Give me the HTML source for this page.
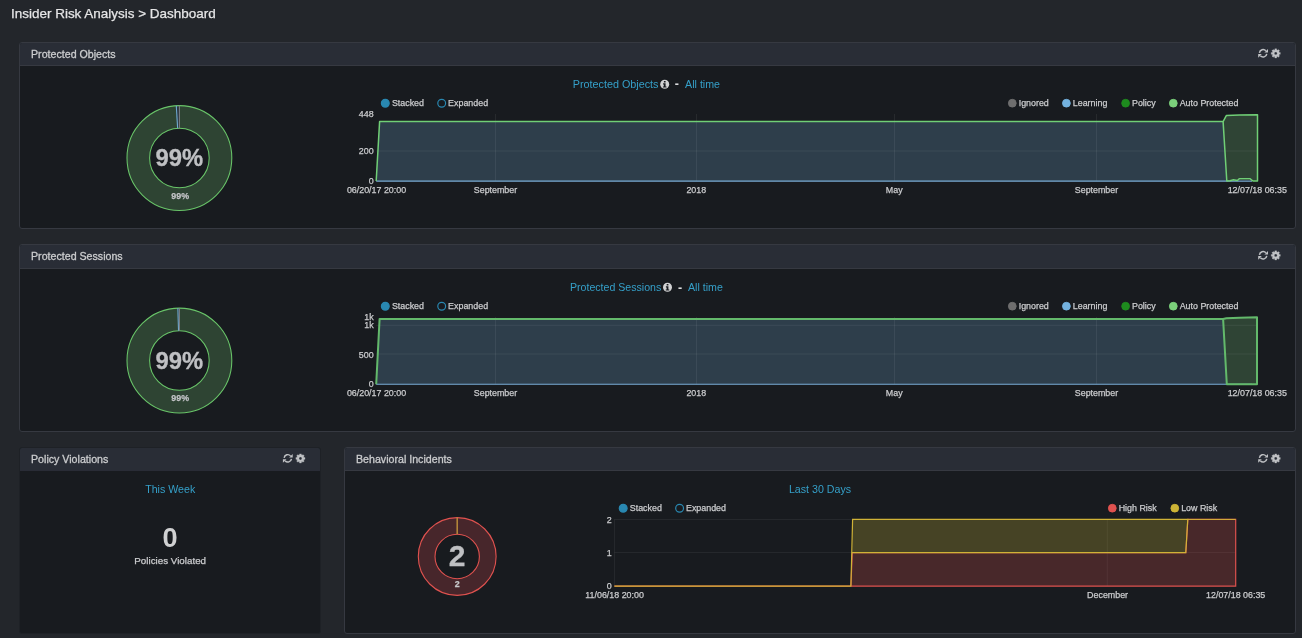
<!DOCTYPE html>
<html lang="en">
<head>
<meta charset="utf-8">
<title>Insider Risk Analysis &gt; Dashboard</title>
<style>
html,body{margin:0;padding:0;}
body{width:1302px;height:638px;overflow:hidden;background:#23262b;color:#d8d9da;font-family:"Liberation Sans",sans-serif;position:relative;}
#root{position:absolute;left:0;top:0;width:1302px;height:638px;will-change:transform;}
.crumb{position:absolute;left:11px;top:5px;font-size:13.48px;line-height:17px;color:#e6e6e7;-webkit-text-stroke:0.25px #e6e6e7;white-space:nowrap;}
.panel{position:absolute;box-sizing:border-box;border:1px solid #363941;border-radius:3px;background:#181b1f;overflow:hidden;}
.panel.dim{border-color:#1e2126;}
.phead{position:absolute;left:0;top:0;right:0;height:22px;background:#292d36;border-bottom:1px solid #363941;}
.panel.dim .phead{border-bottom-color:#292c36;}
.ptitle{-webkit-text-stroke:0.3px #cbccce;position:absolute;left:11px;top:4px;font-size:10.65px;line-height:14px;color:#cbccce;white-space:nowrap;}
.tools{position:absolute;right:14px;top:5px;width:24px;height:12px;}
.t{position:absolute;white-space:nowrap;line-height:1;}
.blue{color:#35a0c9;font-size:10.65px;}
svg{position:absolute;left:0;top:0;overflow:visible;}
svg text{paint-order:stroke;font-family:"Liberation Sans",sans-serif;}
</style>
</head>
<body>
<div id="root">
<div class="crumb">Insider Risk Analysis &gt; Dashboard</div>

<!-- Panel 1 -->
<div class="panel" style="left:19px;top:42px;width:1277px;height:187px;">
  <div class="phead"><div class="ptitle">Protected Objects</div></div>
</div>
<!-- Panel 2 -->
<div class="panel" style="left:19px;top:244px;width:1277px;height:188px;">
  <div class="phead" style="height:23px"><div class="ptitle">Protected Sessions</div></div>
</div>
<!-- Panel 3 -->
<div class="panel dim" style="left:19px;top:447px;width:302px;height:187px;">
  <div class="phead"><div class="ptitle">Policy Violations</div></div>
</div>
<!-- Panel 4 -->
<div class="panel" style="left:344px;top:447px;width:952px;height:187px;">
  <div class="phead"><div class="ptitle">Behavioral Incidents</div></div>
</div>

<svg id="ov" width="1302" height="638" viewBox="0 0 1302 638">
<circle cx="179.4" cy="158" r="41.1" fill="none" stroke="#2e4433" stroke-width="22.599999999999998"/>
<path d="M176.29,105.69A52.4,52.4 0 0 1 179.40,105.60L179.40,128.20A29.8,29.8 0 0 0 177.63,128.25Z" fill="#2b3640" stroke="none"/>
<circle cx="179.4" cy="158" r="52.4" fill="none" stroke="#69c569" stroke-width="1.05"/>
<circle cx="179.4" cy="158" r="29.8" fill="none" stroke="#69c569" stroke-width="1.05"/>
<line x1="176.29" y1="105.69" x2="177.63" y2="128.25" stroke="#6faad2" stroke-width="1.1"/>
<line x1="179.4" y1="105.6" x2="179.4" y2="128.2" stroke="#808285" stroke-width="1"/>
<text x="179.4" y="166.3" text-anchor="middle" font-size="23.8" fill="#bfc0c3" stroke="#bfc0c3" stroke-width="0.3" font-weight="bold">99%</text>
<text x="180.20000000000002" y="199.3" text-anchor="middle" font-size="8.9" fill="#c2c3c6" stroke="#c2c3c6" stroke-width="0.25" font-weight="bold">99%</text>
<text x="572.7" y="87.6" font-size="10.8" fill="#35a0c9">Protected Objects</text>
<circle cx="664.7" cy="84.2" r="4.5" fill="#d2d3d4"/>
<path d="M663.1,83.3h2.5v3.1h0.9v1.1h-3.6v-1.1h0.9v-2h-0.7zM663.9000000000001,81.0h1.7v1.5h-1.7z" fill="#181b1f"/>
<text x="674.7" y="88.3" font-size="12.5" font-weight="bold" fill="#dcddde">-</text>
<text x="685.1" y="87.6" font-size="10.65" fill="#35a0c9">All time</text>
<circle cx="385.3" cy="103.2" r="3.9" fill="#2988b1" stroke="#2988b1" stroke-width="1.2"/>
<text x="391.90000000000003" y="106.4" text-anchor="start" font-size="8.9" fill="#cbccce" stroke="#cbccce" stroke-width="0.25">Stacked</text>
<circle cx="441.7" cy="103.2" r="3.9" fill="none" stroke="#2988b1" stroke-width="1.2"/>
<text x="448.1" y="106.4" text-anchor="start" font-size="8.9" fill="#cbccce" stroke="#cbccce" stroke-width="0.25">Expanded</text>
<circle cx="1012.3" cy="103.2" r="3.9" fill="#6e6e6e" stroke="#6e6e6e" stroke-width="0.9"/>
<text x="1018.6999999999999" y="106.4" text-anchor="start" font-size="8.9" fill="#cbccce" stroke="#cbccce" stroke-width="0.25">Ignored</text>
<circle cx="1066.4" cy="103.2" r="3.9" fill="#74b2df" stroke="#74b2df" stroke-width="0.9"/>
<text x="1072.8000000000002" y="106.4" text-anchor="start" font-size="8.9" fill="#cbccce" stroke="#cbccce" stroke-width="0.25">Learning</text>
<circle cx="1125.6" cy="103.2" r="3.9" fill="#1e8a1e" stroke="#1e8a1e" stroke-width="0.9"/>
<text x="1132.0" y="106.4" text-anchor="start" font-size="8.9" fill="#cbccce" stroke="#cbccce" stroke-width="0.25">Policy</text>
<circle cx="1173.3" cy="103.2" r="3.9" fill="#7bd07b" stroke="#7bd07b" stroke-width="0.9"/>
<text x="1179.7" y="106.4" text-anchor="start" font-size="8.9" fill="#cbccce" stroke="#cbccce" stroke-width="0.25">Auto Protected</text>
<path d="M376.2,181L379.59999999999997,121.6L1223.1,121.6L1226.8,181Z" fill="#6fa8d0" fill-opacity="0.25"/>
<path d="M1223.1,121.6L1226.3,115.60000000000001L1239.5,115.10000000000001L1257.5,114.7L1257.5,181L1252.9,181L1249.9,178.7L1239.5,178.7L1237.3,180.5L1233.5,179.7L1230,180.7L1226.8,181Z" fill="#78c87c" fill-opacity="0.24"/>
<line x1="376.2" x2="1257.5" y1="151" y2="151" stroke="#ffffff" stroke-opacity="0.065" stroke-width="1"/>
<line x1="495.5" x2="495.5" y1="114" y2="181" stroke="#ffffff" stroke-opacity="0.065" stroke-width="1"/>
<line x1="696.5" x2="696.5" y1="114" y2="181" stroke="#ffffff" stroke-opacity="0.065" stroke-width="1"/>
<line x1="894.5" x2="894.5" y1="114" y2="181" stroke="#ffffff" stroke-opacity="0.065" stroke-width="1"/>
<line x1="1096.5" x2="1096.5" y1="114" y2="181" stroke="#ffffff" stroke-opacity="0.065" stroke-width="1"/>
<path d="M376.2,181.1L1252,181.1" fill="none" stroke="#78add6" stroke-width="1.1"/>
<path d="M376.2,181L379.59999999999997,121.6L1223.1,121.6L1226.3,115.60000000000001L1239.5,115.10000000000001L1257.5,114.7L1257.5,181L1252.9,181L1249.9,178.7L1239.5,178.7L1237.3,180.5L1233.5,179.7L1230,180.7L1226.8,181L1223.1,121.6" fill="none" stroke="#70cf76" stroke-width="1.5" stroke-linejoin="round"/>
<text x="373.59999999999997" y="117.1" text-anchor="end" font-size="8.9" fill="#cbccce" stroke="#cbccce" stroke-width="0.25">448</text>
<text x="373.59999999999997" y="154.1" text-anchor="end" font-size="8.9" fill="#cbccce" stroke="#cbccce" stroke-width="0.25">200</text>
<text x="373.59999999999997" y="184.1" text-anchor="end" font-size="8.9" fill="#cbccce" stroke="#cbccce" stroke-width="0.25">0</text>
<text x="376.5" y="193.2" text-anchor="middle" font-size="8.9" fill="#cbccce" stroke="#cbccce" stroke-width="0.25">06/20/17 20:00</text>
<text x="495.5" y="193.2" text-anchor="middle" font-size="8.9" fill="#cbccce" stroke="#cbccce" stroke-width="0.25">September</text>
<text x="696.3" y="193.2" text-anchor="middle" font-size="8.9" fill="#cbccce" stroke="#cbccce" stroke-width="0.25">2018</text>
<text x="894.2" y="193.2" text-anchor="middle" font-size="8.9" fill="#cbccce" stroke="#cbccce" stroke-width="0.25">May</text>
<text x="1096.5" y="193.2" text-anchor="middle" font-size="8.9" fill="#cbccce" stroke="#cbccce" stroke-width="0.25">September</text>
<text x="1257.3" y="193.2" text-anchor="middle" font-size="8.9" fill="#cbccce" stroke="#cbccce" stroke-width="0.25">12/07/18 06:35</text>
<circle cx="179.4" cy="360.5" r="41.1" fill="none" stroke="#2e4433" stroke-width="22.599999999999998"/>
<path d="M177.85,308.12A52.4,52.4 0 0 1 179.40,308.10L179.40,330.70A29.8,29.8 0 0 0 178.52,330.71Z" fill="#2b3640" stroke="none"/>
<circle cx="179.4" cy="360.5" r="52.4" fill="none" stroke="#69c569" stroke-width="1.05"/>
<circle cx="179.4" cy="360.5" r="29.8" fill="none" stroke="#69c569" stroke-width="1.05"/>
<line x1="177.85" y1="308.12" x2="178.52" y2="330.71" stroke="#6faad2" stroke-width="1.1"/>
<line x1="179.4" y1="308.1" x2="179.4" y2="330.7" stroke="#808285" stroke-width="1"/>
<text x="179.4" y="368.8" text-anchor="middle" font-size="23.8" fill="#bfc0c3" stroke="#bfc0c3" stroke-width="0.3" font-weight="bold">99%</text>
<text x="180.20000000000002" y="401.3" text-anchor="middle" font-size="8.9" fill="#c2c3c6" stroke="#c2c3c6" stroke-width="0.25" font-weight="bold">99%</text>
<text x="570" y="290.6" font-size="10.6" fill="#35a0c9">Protected Sessions</text>
<circle cx="667.5" cy="287.2" r="4.5" fill="#d2d3d4"/>
<path d="M665.9,286.3h2.5v3.1h0.9v1.1h-3.6v-1.1h0.9v-2h-0.7zM666.7,284.0h1.7v1.5h-1.7z" fill="#181b1f"/>
<text x="677.9" y="291.8" font-size="12.5" font-weight="bold" fill="#dcddde">-</text>
<text x="688" y="290.6" font-size="10.65" fill="#35a0c9">All time</text>
<circle cx="385.3" cy="306.2" r="3.9" fill="#2988b1" stroke="#2988b1" stroke-width="1.2"/>
<text x="391.90000000000003" y="309.4" text-anchor="start" font-size="8.9" fill="#cbccce" stroke="#cbccce" stroke-width="0.25">Stacked</text>
<circle cx="441.7" cy="306.2" r="3.9" fill="none" stroke="#2988b1" stroke-width="1.2"/>
<text x="448.1" y="309.4" text-anchor="start" font-size="8.9" fill="#cbccce" stroke="#cbccce" stroke-width="0.25">Expanded</text>
<circle cx="1012.3" cy="306.2" r="3.9" fill="#6e6e6e" stroke="#6e6e6e" stroke-width="0.9"/>
<text x="1018.6999999999999" y="309.4" text-anchor="start" font-size="8.9" fill="#cbccce" stroke="#cbccce" stroke-width="0.25">Ignored</text>
<circle cx="1066.4" cy="306.2" r="3.9" fill="#74b2df" stroke="#74b2df" stroke-width="0.9"/>
<text x="1072.8000000000002" y="309.4" text-anchor="start" font-size="8.9" fill="#cbccce" stroke="#cbccce" stroke-width="0.25">Learning</text>
<circle cx="1125.6" cy="306.2" r="3.9" fill="#1e8a1e" stroke="#1e8a1e" stroke-width="0.9"/>
<text x="1132.0" y="309.4" text-anchor="start" font-size="8.9" fill="#cbccce" stroke="#cbccce" stroke-width="0.25">Policy</text>
<circle cx="1173.3" cy="306.2" r="3.9" fill="#7bd07b" stroke="#7bd07b" stroke-width="0.9"/>
<text x="1179.7" y="309.4" text-anchor="start" font-size="8.9" fill="#cbccce" stroke="#cbccce" stroke-width="0.25">Auto Protected</text>
<path d="M376.2,384.2L379.59999999999997,318.9L1223.1,318.9L1226.8,384.2Z" fill="#6fa8d0" fill-opacity="0.25"/>
<path d="M1223.1,318.9L1226.3,318.2L1239.5,317.7L1257.0,317.3L1257.0,384.2L1226.8,384.2Z" fill="#78c87c" fill-opacity="0.24"/>
<line x1="376.2" x2="1257.0" y1="325.3" y2="325.3" stroke="#ffffff" stroke-opacity="0.065" stroke-width="1"/>
<line x1="376.2" x2="1257.0" y1="354" y2="354" stroke="#ffffff" stroke-opacity="0.065" stroke-width="1"/>
<line x1="495.5" x2="495.5" y1="317" y2="384.2" stroke="#ffffff" stroke-opacity="0.065" stroke-width="1"/>
<line x1="696.5" x2="696.5" y1="317" y2="384.2" stroke="#ffffff" stroke-opacity="0.065" stroke-width="1"/>
<line x1="894.5" x2="894.5" y1="317" y2="384.2" stroke="#ffffff" stroke-opacity="0.065" stroke-width="1"/>
<line x1="1096.5" x2="1096.5" y1="317" y2="384.2" stroke="#ffffff" stroke-opacity="0.065" stroke-width="1"/>
<path d="M376.2,384.3L1252,384.3" fill="none" stroke="#78add6" stroke-width="1.1"/>
<path d="M376.2,384.2L379.59999999999997,318.9L1223.1,318.9L1226.3,318.2L1239.5,317.7L1257.0,317.3L1257.0,384.2L1226.8,384.2L1223.1,318.9" fill="none" stroke="#63b96b" stroke-width="2.0" stroke-linejoin="round"/>
<text x="373.59999999999997" y="319.70000000000005" text-anchor="end" font-size="8.9" fill="#cbccce" stroke="#cbccce" stroke-width="0.25">1k</text>
<text x="373.59999999999997" y="327.90000000000003" text-anchor="end" font-size="8.9" fill="#cbccce" stroke="#cbccce" stroke-width="0.25">1k</text>
<text x="373.59999999999997" y="357.70000000000005" text-anchor="end" font-size="8.9" fill="#cbccce" stroke="#cbccce" stroke-width="0.25">500</text>
<text x="373.59999999999997" y="387.1" text-anchor="end" font-size="8.9" fill="#cbccce" stroke="#cbccce" stroke-width="0.25">0</text>
<text x="376.5" y="396" text-anchor="middle" font-size="8.9" fill="#cbccce" stroke="#cbccce" stroke-width="0.25">06/20/17 20:00</text>
<text x="495.5" y="396" text-anchor="middle" font-size="8.9" fill="#cbccce" stroke="#cbccce" stroke-width="0.25">September</text>
<text x="696.3" y="396" text-anchor="middle" font-size="8.9" fill="#cbccce" stroke="#cbccce" stroke-width="0.25">2018</text>
<text x="894.2" y="396" text-anchor="middle" font-size="8.9" fill="#cbccce" stroke="#cbccce" stroke-width="0.25">May</text>
<text x="1096.5" y="396" text-anchor="middle" font-size="8.9" fill="#cbccce" stroke="#cbccce" stroke-width="0.25">September</text>
<text x="1257.3" y="396" text-anchor="middle" font-size="8.9" fill="#cbccce" stroke="#cbccce" stroke-width="0.25">12/07/18 06:35</text>
<text x="170.2" y="493.2" text-anchor="middle" font-size="10.65" fill="#35a0c9">This Week</text>
<text x="170.1" y="546.6" text-anchor="middle" font-size="27.2" font-weight="bold" fill="#d0d1d2">0</text>
<text x="170.2" y="564" text-anchor="middle" font-size="9.8" fill="#cbccce" stroke="#cbccce" stroke-width="0.25">Policies Violated</text>
<circle cx="457.2" cy="556.5" r="30.549999999999997" fill="none" stroke="#47262b" stroke-width="16.7"/>
<circle cx="457.2" cy="556.5" r="38.9" fill="none" stroke="#e0524f" stroke-width="1.1"/>
<circle cx="457.2" cy="556.5" r="22.2" fill="none" stroke="#e0524f" stroke-width="1.1"/>
<line x1="457.2" x2="457.2" y1="517.6" y2="534.3" stroke="#b98a3a" stroke-width="1.5"/>
<text x="457.2" y="566.0" text-anchor="middle" font-size="30" fill="#bfc0c3" stroke="#bfc0c3" stroke-width="0.3" font-weight="bold">2</text>
<text x="457.2" y="587.1" text-anchor="middle" font-size="8.9" fill="#c6c7c9" stroke="#c6c7c9" stroke-width="0.25" font-weight="bold">2</text>
<text x="820" y="493.2" text-anchor="middle" font-size="10.65" fill="#35a0c9">Last 30 Days</text>
<circle cx="623.2" cy="508.2" r="3.9" fill="#2988b1" stroke="#2988b1" stroke-width="1.2"/>
<text x="629.8000000000001" y="511.4" text-anchor="start" font-size="8.9" fill="#cbccce" stroke="#cbccce" stroke-width="0.25">Stacked</text>
<circle cx="679.6" cy="508.2" r="3.9" fill="none" stroke="#2988b1" stroke-width="1.2"/>
<text x="686.0" y="511.4" text-anchor="start" font-size="8.9" fill="#cbccce" stroke="#cbccce" stroke-width="0.25">Expanded</text>
<circle cx="1112.3" cy="508.2" r="3.9" fill="#e0524f" stroke="#e0524f" stroke-width="0.9"/>
<text x="1118.7" y="511.4" text-anchor="start" font-size="8.9" fill="#cbccce" stroke="#cbccce" stroke-width="0.25">High Risk</text>
<circle cx="1174.8" cy="508.2" r="3.9" fill="#cdb436" stroke="#cdb436" stroke-width="0.9"/>
<text x="1181.2" y="511.4" text-anchor="start" font-size="8.9" fill="#cbccce" stroke="#cbccce" stroke-width="0.25">Low Risk</text>
<line x1="614.4" x2="1235.7" y1="519.4" y2="519.4" stroke="#ffffff" stroke-opacity="0.065" stroke-width="1"/>
<line x1="614.4" x2="1235.7" y1="552.6" y2="552.6" stroke="#ffffff" stroke-opacity="0.065" stroke-width="1"/>
<line x1="614.4" x2="614.4" y1="519.4" y2="586.2" stroke="#ffffff" stroke-opacity="0.065" stroke-width="1"/>
<line x1="1107.3" x2="1107.3" y1="519.4" y2="586.2" stroke="#ffffff" stroke-opacity="0.065" stroke-width="1"/>
<path d="M850.9,586.2L852.3,552.6L1185.8,552.6L1187.8,519.4L1235.7,519.4L1235.7,586.2Z" fill="#e0524f" fill-opacity="0.24"/>
<path d="M852.3,552.6L852.8,519.4L1187.8,519.4L1185.8,552.6Z" fill="#cdb436" fill-opacity="0.26"/>
<path d="M614.4,586.2L850.9,586.2L852.3,552.6L1185.8,552.6L1187.8,519.4L1235.7,519.4L1235.7,586.2L850.9,586.2" fill="none" stroke="#dc514e" stroke-width="1.2"/>
<path d="M614.4,586.2L850.9,586.2L852.6,519.4L1187.8,519.4L1185.8,552.6L852.3,552.6" fill="none" stroke="#d0b337" stroke-width="1.2"/>
<path d="M1187.8,519.4L1235.7,519.4" fill="none" stroke="#d0b337" stroke-width="1.0"/>
<text x="611.8" y="522.5" text-anchor="end" font-size="8.9" fill="#cbccce" stroke="#cbccce" stroke-width="0.25">2</text>
<text x="611.8" y="555.7" text-anchor="end" font-size="8.9" fill="#cbccce" stroke="#cbccce" stroke-width="0.25">1</text>
<text x="611.8" y="589.3000000000001" text-anchor="end" font-size="8.9" fill="#cbccce" stroke="#cbccce" stroke-width="0.25">0</text>
<text x="614.6" y="598" text-anchor="middle" font-size="8.9" fill="#cbccce" stroke="#cbccce" stroke-width="0.25">11/06/18 20:00</text>
<text x="1107.6" y="598" text-anchor="middle" font-size="8.9" fill="#cbccce" stroke="#cbccce" stroke-width="0.25">December</text>
<text x="1235.7" y="598" text-anchor="middle" font-size="8.9" fill="#cbccce" stroke="#cbccce" stroke-width="0.25">12/07/18 06:35</text>
<path d="M1259.44,52.79A3.7,3.7 0 0 1 1265.85,50.82M1266.76,53.81A3.7,3.7 0 0 1 1260.35,55.78" fill="none" stroke="#bfc1c4" stroke-width="1.45"/>
<path d="M1268.0000000000002,48.9V52.5H1264.4ZM1258.2,57.699999999999996V54.099999999999994H1261.8000000000002Z" fill="#bfc1c4"/>
<path d="M1274.83,48.84L1276.67,48.84L1276.70,49.98L1277.50,50.31L1278.32,49.52L1279.63,50.83L1278.84,51.65L1279.17,52.45L1280.31,52.48L1280.31,54.32L1279.17,54.35L1278.84,55.15L1279.63,55.97L1278.32,57.28L1277.50,56.49L1276.70,56.82L1276.67,57.96L1274.83,57.96L1274.80,56.82L1274.00,56.49L1273.18,57.28L1271.87,55.97L1272.66,55.15L1272.33,54.35L1271.19,54.32L1271.19,52.48L1272.33,52.45L1272.66,51.65L1271.87,50.83L1273.18,49.52L1274.00,50.31L1274.80,49.98ZM1277.2,53.4A1.45,1.45 0 1 0 1274.3,53.4A1.45,1.45 0 1 0 1277.2,53.4Z" fill="#bfc1c4" fill-rule="evenodd" stroke="#bfc1c4" stroke-width="0.3" stroke-linejoin="round"/>
<path d="M1259.44,254.79A3.7,3.7 0 0 1 1265.85,252.82M1266.76,255.81A3.7,3.7 0 0 1 1260.35,257.78" fill="none" stroke="#bfc1c4" stroke-width="1.45"/>
<path d="M1268.0000000000002,250.9V254.5H1264.4ZM1258.2,259.7V256.1H1261.8000000000002Z" fill="#bfc1c4"/>
<path d="M1274.83,250.84L1276.67,250.84L1276.70,251.98L1277.50,252.31L1278.32,251.52L1279.63,252.83L1278.84,253.65L1279.17,254.45L1280.31,254.48L1280.31,256.32L1279.17,256.35L1278.84,257.15L1279.63,257.97L1278.32,259.28L1277.50,258.49L1276.70,258.82L1276.67,259.96L1274.83,259.96L1274.80,258.82L1274.00,258.49L1273.18,259.28L1271.87,257.97L1272.66,257.15L1272.33,256.35L1271.19,256.32L1271.19,254.48L1272.33,254.45L1272.66,253.65L1271.87,252.83L1273.18,251.52L1274.00,252.31L1274.80,251.98ZM1277.2,255.4A1.45,1.45 0 1 0 1274.3,255.4A1.45,1.45 0 1 0 1277.2,255.4Z" fill="#bfc1c4" fill-rule="evenodd" stroke="#bfc1c4" stroke-width="0.3" stroke-linejoin="round"/>
<path d="M284.14,457.84A3.7,3.7 0 0 1 290.55,455.87M291.46,458.86A3.7,3.7 0 0 1 285.05,460.83" fill="none" stroke="#bfc1c4" stroke-width="1.45"/>
<path d="M292.69999999999993,453.95V457.54999999999995H289.09999999999997ZM282.9,462.74999999999994V459.15H286.49999999999994Z" fill="#bfc1c4"/>
<path d="M299.53,453.89L301.37,453.89L301.40,455.03L302.20,455.36L303.02,454.57L304.33,455.88L303.54,456.70L303.87,457.50L305.01,457.53L305.01,459.37L303.87,459.40L303.54,460.20L304.33,461.02L303.02,462.33L302.20,461.54L301.40,461.87L301.37,463.01L299.53,463.01L299.50,461.87L298.70,461.54L297.88,462.33L296.57,461.02L297.36,460.20L297.03,459.40L295.89,459.37L295.89,457.53L297.03,457.50L297.36,456.70L296.57,455.88L297.88,454.57L298.70,455.36L299.50,455.03ZM301.9,458.45A1.45,1.45 0 1 0 299.0,458.45A1.45,1.45 0 1 0 301.9,458.45Z" fill="#bfc1c4" fill-rule="evenodd" stroke="#bfc1c4" stroke-width="0.3" stroke-linejoin="round"/>
<path d="M1259.44,457.84A3.7,3.7 0 0 1 1265.85,455.87M1266.76,458.86A3.7,3.7 0 0 1 1260.35,460.83" fill="none" stroke="#bfc1c4" stroke-width="1.45"/>
<path d="M1268.0000000000002,453.95V457.54999999999995H1264.4ZM1258.2,462.74999999999994V459.15H1261.8000000000002Z" fill="#bfc1c4"/>
<path d="M1274.83,453.89L1276.67,453.89L1276.70,455.03L1277.50,455.36L1278.32,454.57L1279.63,455.88L1278.84,456.70L1279.17,457.50L1280.31,457.53L1280.31,459.37L1279.17,459.40L1278.84,460.20L1279.63,461.02L1278.32,462.33L1277.50,461.54L1276.70,461.87L1276.67,463.01L1274.83,463.01L1274.80,461.87L1274.00,461.54L1273.18,462.33L1271.87,461.02L1272.66,460.20L1272.33,459.40L1271.19,459.37L1271.19,457.53L1272.33,457.50L1272.66,456.70L1271.87,455.88L1273.18,454.57L1274.00,455.36L1274.80,455.03ZM1277.2,458.45A1.45,1.45 0 1 0 1274.3,458.45A1.45,1.45 0 1 0 1277.2,458.45Z" fill="#bfc1c4" fill-rule="evenodd" stroke="#bfc1c4" stroke-width="0.3" stroke-linejoin="round"/>
</svg>
</div>
</body>
</html>
